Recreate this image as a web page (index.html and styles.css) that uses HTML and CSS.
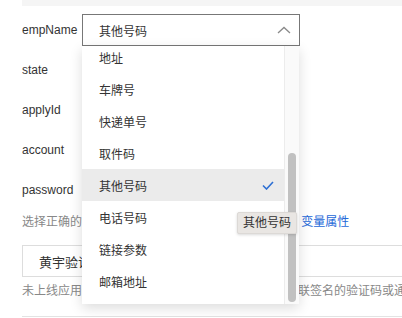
FILE: index.html
```html
<!DOCTYPE html>
<html lang="zh-CN">
<head>
    <meta charset="UTF-8">
    <meta name="viewport" content="width=device-width, initial-scale=1.0">
    <title>变量设置</title>
    <link rel="stylesheet" href="styles.css">
</head>
<body>
    <div class="page">
        <div class="top-band"></div>

        <div class="form">
            <div class="row">
                <span class="label">empName</span>
                <div class="select">
                    <span class="select-value">其他号码</span>
                    <svg class="chevron" width="14" height="8" viewBox="0 0 14 8">
                        <path d="M1 7 L7 1.5 L13 7" fill="none" stroke="#8a8a8a" stroke-width="1.3"/>
                    </svg>

                    <div class="dropdown">
                        <ul class="options">
                            <li>地址</li>
                            <li>车牌号</li>
                            <li>快递单号</li>
                            <li>取件码</li>
                            <li class="selected">其他号码
                                <svg class="check" width="12" height="9" viewBox="0 0 12 9">
                                    <path d="M1 4.5 L4.5 8 L11 1" fill="none" stroke="#2d6fd3" stroke-width="1.6"/>
                                </svg>
                            </li>
                            <li>电话号码</li>
                            <li>链接参数</li>
                            <li>邮箱地址</li>
                        </ul>
                        <div class="scroll-track"><div class="scroll-thumb"></div></div>
                    </div>

                    <div class="tooltip">其他号码</div>
                </div>
            </div>
            <div class="row"><span class="label">state</span></div>
            <div class="row"><span class="label">applyId</span></div>
            <div class="row"><span class="label">account</span></div>
            <div class="row"><span class="label">password</span></div>
        </div>

        <p class="help">选择正确的变量类型，否则短信可能发送失败，参考 <a href="#" class="link">变量属性</a></p>

        <div class="sign-box">黄宇验证码签名</div>

        <p class="help note">未上线应用仅可向已绑定的测试手机号发送与应用关联签名的验证码或通知短信</p>

        <div class="divider"></div>
    </div>
</body>
</html>
```

FILE: styles.css
```css
body {
    margin: 0;
    overflow: hidden;
    background: #fff;
    font-family: 'Liberation Sans', 'Noto Sans CJK SC', sans-serif;
    font-size: 12px;
    color: #333;
}
.page {
    padding-left: 22px;
}
.top-band {
    height: 6px;
    background: #f5f5f5;
}
.form {
    margin-top: 8px;
}
.row {
    display: flex;
    align-items: center;
    height: 32px;
    margin-bottom: 8px;
}
.label {
    width: 60px;
}
.select {
    position: relative;
    box-sizing: border-box;
    width: 218px;
    height: 32px;
    border: 1px solid #777;
    display: flex;
    align-items: center;
    padding-left: 16px;
}
.select-value {
    flex: 1;
}
.chevron {
    margin-right: 8px;
}
.dropdown {
    position: absolute;
    top: 31px;
    left: -1px;
    width: 217px;
    height: 258px;
    background: #fff;
    overflow: hidden;
    box-shadow: 0 4px 12px rgba(0, 0, 0, 0.14);
    z-index: 5;
}
.options {
    list-style: none;
    margin: -5px 15px 0 0;
    padding: 0;
}
.options li {
    display: flex;
    align-items: center;
    justify-content: space-between;
    height: 32px;
    padding: 0 10px 0 17px;
}
.options li.selected {
    background: #ebebeb;
}
.scroll-track {
    position: absolute;
    top: 0;
    right: 0;
    bottom: 0;
    width: 14px;
    background: #fafafa;
    border-left: 1px solid #ececec;
}
.scroll-thumb {
    position: absolute;
    top: 107px;
    left: 3px;
    width: 8px;
    height: 149px;
    border-radius: 4px;
    background: #c1c1c1;
}
.tooltip {
    position: absolute;
    top: 197px;
    left: 154px;
    padding: 3px 5px;
    background: #e9e6e3;
    border: 1px solid #dcd9d6;
    border-radius: 2px;
    box-shadow: 0 1px 3px rgba(0, 0, 0, 0.15);
    color: #333;
    line-height: 14px;
    white-space: nowrap;
    z-index: 6;
}
.help {
    margin: 0;
    line-height: 16px;
    color: #888;
    white-space: nowrap;
}
.link {
    color: #2468d8;
    text-decoration: none;
}
.sign-box {
    box-sizing: border-box;
    width: 420px;
    height: 32px;
    margin-top: 15px;
    border: 1px solid #ddd;
    padding-left: 16px;
    display: flex;
    align-items: center;
    font-size: 13px;
}
.note {
    margin-top: 6px;
}
.divider {
    height: 1px;
    margin-top: 17px;
    background: #e3e3e3;
}
```
